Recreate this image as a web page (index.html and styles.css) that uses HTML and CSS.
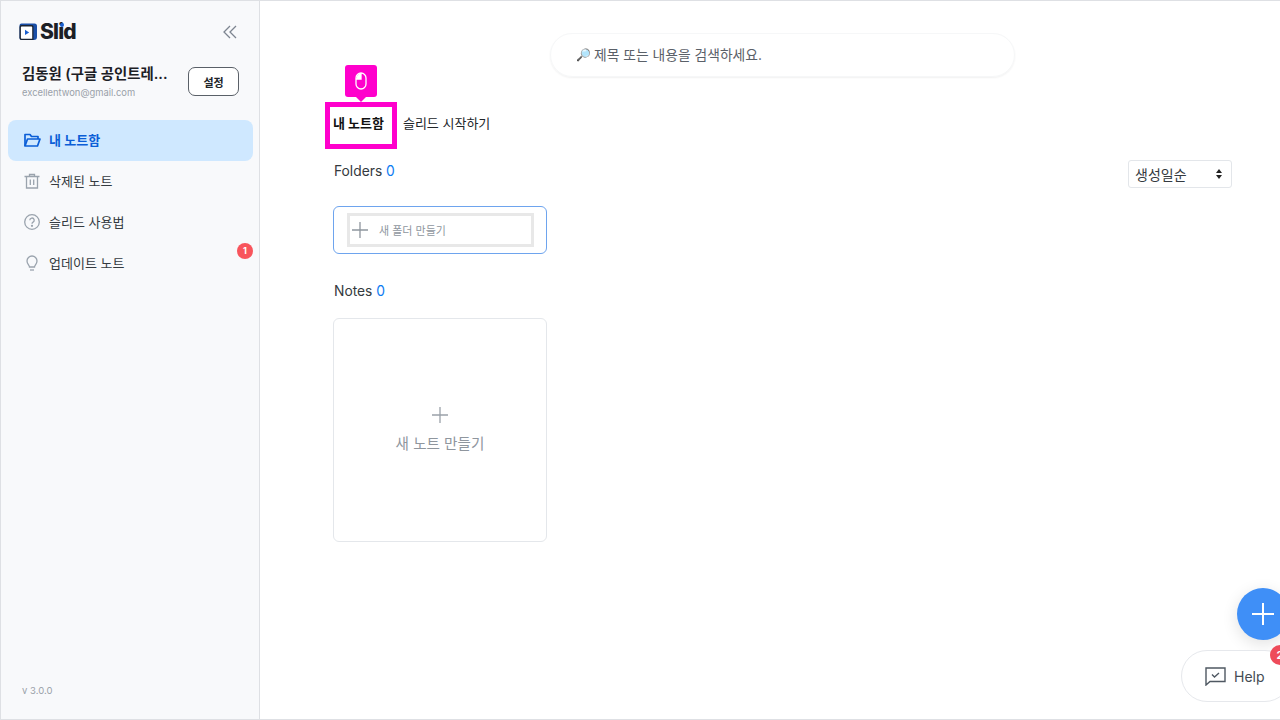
FILE: index.html
```html
<!DOCTYPE html>
<html lang="ko">
<head>
    <meta charset="utf-8">
    <title>Slid</title>
    <link rel="stylesheet" href="styles.css">
</head>
<body>
    <div class="app">
        <aside class="sidebar">
            <div class="brand">
                <div class="logo">
                    <svg width="19" height="18" viewBox="0 0 19 18">
                        <path d="M2.500 0.500h13A2.500 2.500 0 0 1 18 3v11a3 3 0 0 1-3 3H2.500A2 2 0 0 1 .5 15V2.500a2 2 0 0 1 2-2z" fill="#1a4fa8"/>
                        <path d="M2.500 2h10.500a1.500 1.500 0 0 1 1.500 1.500V17H2.500A2 2 0 0 1 .5 15V4a2 2 0 0 1 2-2z" fill="#1b2433"/>
                        <path d="M2.700 3.500h9.800a.7.7 0 0 1 .7.7V15.700H2.700a.8.8 0 0 1-.8-.8V4.300a.8.8 0 0 1 .8-.8z" fill="#fff"/>
                        <path d="M6 6.800l4.200 2.600L6 12z" fill="#1a5fd0"/>
                    </svg>
                    <span class="logo-text">Slid</span>
                    <span class="logo-dot"></span>
                </div>
                <svg class="collapse" width="14" height="14" viewBox="0 0 14 14" fill="none" stroke="#7d8590" stroke-width="1.300">
                    <path d="M7 1L1 7l6 6M13 1L7 7l6 6"/>
                </svg>
            </div>
            <div class="profile">
                <div class="profile-info">
                    <div class="profile-name">김동원 (구글 공인트레...</div>
                    <div class="profile-mail">excellentwon@gmail.com</div>
                </div>
                <button class="settings">설정</button>
            </div>
            <nav class="menu">
                <a class="menu-item active">
                    <svg width="18" height="18" viewBox="0 0 18 18" fill="none" stroke="#0b5ed7" stroke-width="1.700" stroke-linejoin="round">
                        <path d="M2 15V3.500h5l1.500 2H15v2.500"/>
                        <path d="M2 15l2.500-7H17l-2.500 7z"/>
                    </svg>
                    <span>내 노트함</span>
                </a>
                <a class="menu-item">
                    <svg width="18" height="18" viewBox="0 0 18 18" fill="none" stroke="#9aa3ad" stroke-width="1.300">
                        <path d="M1.500 4.500h15M6.500 4.500V2.500h5v2M3.500 4.500V16h11V4.500M7.300 7.500v5.500M10.700 7.500v5.500"/>
                    </svg>
                    <span>삭제된 노트</span>
                </a>
                <a class="menu-item">
                    <svg width="18" height="18" viewBox="0 0 18 18" fill="none" stroke="#9aa3ad" stroke-width="1.300">
                        <circle cx="9" cy="9" r="7.300"/>
                        <path d="M6.800 7.200a2.200 2.200 0 1 1 3.300 1.900c-.8.500-1.100.9-1.100 1.700"/>
                        <circle cx="9" cy="12.800" r=".5" fill="#9aa3ad"/>
                    </svg>
                    <span>슬리드 사용법</span>
                </a>
                <a class="menu-item">
                    <svg width="18" height="18" viewBox="0 0 18 18" fill="none" stroke="#9aa3ad" stroke-width="1.300">
                        <path d="M6.500 13c0-1.800-2.500-2.800-2.500-6a5 5 0 0 1 10 0c0 3.200-2.500 4.200-2.500 6z"/>
                        <path d="M7 16h4"/>
                    </svg>
                    <span>업데이트 노트</span>
                    <span class="menu-badge">1</span>
                </a>
            </nav>
            <div class="version">v 3.0.0</div>
        </aside>

        <main class="content">
            <div class="search">
                <span class="search-icon">🔎</span>
                <span>제목 또는 내용을 검색하세요.</span>
            </div>

            <div class="tabs">
                <span class="tab tab-active">내 노트함</span>
                <span class="tab">슬리드 시작하기</span>
            </div>

            <div class="folders-row">
                <div class="section-title">Folders <span class="count">0</span></div>
                <div class="sort">
                    <span>생성일순</span>
                    <svg width="6" height="10" viewBox="0 0 6 10" fill="#222"><path d="M3 0l3 4H0zM3 10L0 6h6z"/></svg>
                </div>
            </div>

            <div class="new-folder">
                <div class="new-folder-inner">
                    <svg width="16" height="16" viewBox="0 0 16 16" stroke="#8f969e" stroke-width="1.300"><path d="M8 0v16M0 8h16"/></svg>
                    <span>새 폴더 만들기</span>
                </div>
            </div>

            <div class="section-title notes-title">Notes <span class="count">0</span></div>

            <div class="new-note">
                <svg width="16" height="16" viewBox="0 0 16 16" stroke="#9aa1a9" stroke-width="1.300"><path d="M8 0v16M0 8h16"/></svg>
                <span>새 노트 만들기</span>
            </div>
        </main>
    </div>

    <!-- guide overlay -->
    <div class="guide-tip">
        <svg width="12" height="18" viewBox="0 0 12 18" fill="none" stroke="#fff" stroke-width="1.300">
            <rect x="1" y="1" width="10" height="16" rx="5"/>
            <path d="M6 1v6H1" />
            <path d="M1.500 7H6V1.500C3 1.500 1.500 4 1.500 7z" fill="#fff" stroke="none"/>
        </svg>
    </div>
    <div class="guide-box"></div>

    <button class="fab">
        <svg width="22" height="22" viewBox="0 0 22 22" stroke="#fff" stroke-width="2"><path d="M11 0v22M0 11h22"/></svg>
    </button>
    <div class="help">
        <svg width="21" height="19" viewBox="0 0 21 19" fill="none" stroke="#4f5862" stroke-width="1.400">
            <path d="M1 1h19v13.500H5L1 18z"/>
            <path d="M7 7.500l2.500 2.500 4.500-4" />
        </svg>
        <span>Help</span>
    </div>
    <span class="help-badge">2</span>
</body>
</html>
```

FILE: styles.css
```css
* {
    box-sizing: border-box;
}

body {
    margin: 0;
    height: 720px;
    overflow: hidden;
    background: #fff;
    color: #212529;
    font-family: "Inter", "Noto Sans CJK KR", sans-serif;
}

.app {
    display: flex;
    height: 720px;
    border: 1px solid #dee0e4;
    border-right: 0;
}

.sidebar {
    width: 259px;
    flex: none;
    display: flex;
    flex-direction: column;
    background: #f8f9fb;
    border-right: 1px solid #dee0e4;
}

.brand {
    display: flex;
    justify-content: space-between;
    align-items: center;
    padding: 20px 22px 0 18px;
}

.logo {
    position: relative;
    display: flex;
    align-items: center;
    gap: 2px;
}

.logo-text {
    font-size: 21px;
    font-weight: 800;
    letter-spacing: -0.8px;
    line-height: 22px;
    color: #1c2025;
}

.logo-dot {
    position: absolute;
    left: 41px;
    top: 2px;
    width: 4px;
    height: 4px;
    border-radius: 50%;
    background: #1a5fd0;
}

.profile {
    display: flex;
    justify-content: space-between;
    align-items: flex-start;
    padding: 21px 20px 0 21px;
}

.profile-name {
    font-size: 14.400px;
    font-weight: 600;
    line-height: 20px;
    color: #1c2025;
}

.profile-mail {
    margin-top: 2px;
    font-size: 9.400px;
    line-height: 14px;
    color: #9aa1a9;
}

.settings {
    width: 51px;
    height: 29px;
    margin-top: 3px;
    padding: 0;
    background: #fff;
    border: 1px solid #5a6068;
    border-radius: 7px;
    font-family: inherit;
    font-size: 11px;
    font-weight: 600;
    color: #212529;
}

.menu {
    display: flex;
    flex-direction: column;
    margin-top: 20px;
    padding: 0 6px 0 7px;
}

.menu-item {
    position: relative;
    display: flex;
    align-items: center;
    gap: 8px;
    height: 41px;
    padding: 0 0 2px 15px;
    border-radius: 8px;
    font-size: 13px;
    color: #343a40;
}

.menu-item.active {
    background: #cfe8ff;
    color: #0b5ed7;
    font-weight: 600;
}

.menu-badge {
    position: absolute;
    top: 0;
    right: 0;
    width: 16px;
    height: 16px;
    border-radius: 50%;
    background: #f8545c;
    color: #fff;
    font-size: 9px;
    font-weight: 700;
    line-height: 16px;
    text-align: center;
}

.version {
    margin-top: auto;
    padding: 0 0 21px 21px;
    font-size: 9.500px;
    line-height: 14px;
    color: #9aa1a9;
}

.content {
    flex: 1;
    padding: 0 48px 0 73px;
}

.search {
    display: flex;
    align-items: center;
    gap: 3px;
    width: 465px;
    height: 44px;
    margin: 32px 0 0 217px;
    padding-left: 25px;
    border: 1px solid #f6f7f8;
    border-radius: 22px;
    box-shadow: 0 1px 2px rgba(0, 0, 0, 0.06);
    font-size: 13.800px;
    line-height: 20px;
    color: #5a6068;
}

.search-icon {
    font-size: 12px;
}

.tabs {
    display: flex;
    gap: 19px;
    margin-top: 36px;
    line-height: 20px;
    font-size: 13px;
}

.tab-active {
    font-weight: 700;
    color: #111;
}

.folders-row {
    display: flex;
    justify-content: space-between;
    align-items: flex-start;
    margin-top: 28px;
}

.section-title {
    padding-left: 1px;
    font-size: 13.800px;
    line-height: 20px;
    color: #343a40;
}

.count {
    color: #0d7bf2;
}

.sort {
    display: flex;
    justify-content: space-between;
    align-items: center;
    width: 104px;
    height: 28px;
    margin-top: -1px;
    padding: 0 9px 0 6px;
    border: 1px solid #e3e6ea;
    border-radius: 3px;
    font-size: 14px;
    color: #343a40;
}

.new-folder {
    display: flex;
    align-items: center;
    width: 214px;
    height: 48px;
    margin-top: 18px;
    padding-left: 13px;
    border: 1px solid #6ea4ee;
    border-radius: 6px;
}

.new-folder-inner {
    display: flex;
    align-items: center;
    gap: 11px;
    width: 187px;
    height: 34px;
    padding-left: 2px;
    border: 3px solid #e8e8e8;
    font-size: 11px;
    color: #8f969e;
}

.notes-title {
    margin-top: 27px;
}

.new-note {
    display: flex;
    flex-direction: column;
    align-items: center;
    gap: 9px;
    width: 214px;
    height: 224px;
    margin-top: 17px;
    padding-top: 88px;
    border: 1px solid #e4e7eb;
    border-radius: 6px;
    font-size: 14.600px;
    color: #8f969e;
}

.guide-box {
    position: absolute;
    left: 325px;
    top: 102px;
    width: 72px;
    height: 47px;
    border: 5px solid #ff00cc;
}

.guide-tip {
    position: absolute;
    left: 345px;
    top: 65px;
    display: flex;
    justify-content: center;
    align-items: center;
    width: 32px;
    height: 32px;
    background: #ff00cc;
    border-radius: 3px;
}

.guide-tip::after {
    content: "";
    position: absolute;
    left: 11px;
    top: 32px;
    border: 5px solid transparent;
    border-top-color: #ff00cc;
    border-bottom: 0;
}

.fab {
    position: absolute;
    left: 1237px;
    top: 588px;
    display: flex;
    justify-content: center;
    align-items: center;
    width: 52px;
    height: 52px;
    padding: 0;
    border: 0;
    border-radius: 50%;
    background: #3f8ff7;
    box-shadow: 0 4px 16px rgba(0, 0, 0, 0.12);
}

.help {
    position: absolute;
    left: 1181px;
    top: 650px;
    display: flex;
    align-items: center;
    gap: 8px;
    width: 110px;
    height: 52px;
    padding-left: 23px;
    background: #fff;
    border: 1px solid #e6e8ec;
    border-radius: 26px;
    font-size: 14px;
    color: #444b53;
}

.help-badge {
    position: absolute;
    left: 1270px;
    top: 645px;
    width: 20px;
    height: 20px;
    border-radius: 50%;
    background: #ee4b5a;
    color: #fff;
    font-size: 11px;
    font-weight: 700;
    line-height: 20px;
    text-align: center;
}
```
